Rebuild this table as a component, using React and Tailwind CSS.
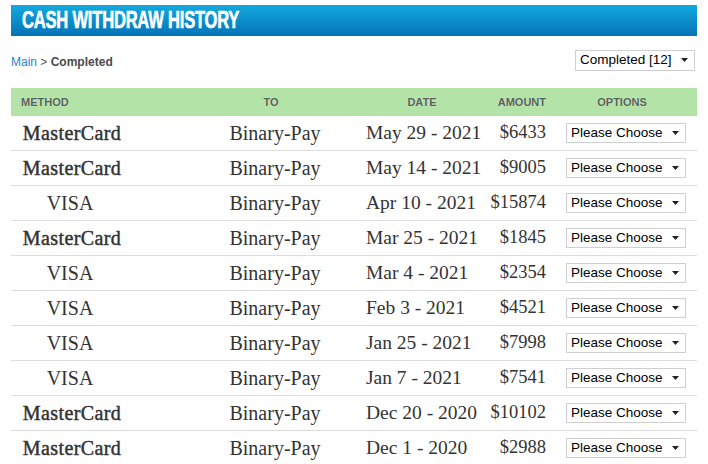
import React from 'react';

const rows = [
  { method: 'MasterCard', date: 'May 29 - 2021', amount: '$6433' },
  { method: 'MasterCard', date: 'May 14 - 2021', amount: '$9005' },
  { method: 'VISA', date: 'Apr 10 - 2021', amount: '$15874' },
  { method: 'MasterCard', date: 'Mar 25 - 2021', amount: '$1845' },
  { method: 'VISA', date: 'Mar 4 - 2021', amount: '$2354' },
  { method: 'VISA', date: 'Feb 3 - 2021', amount: '$4521' },
  { method: 'VISA', date: 'Jan 25 - 2021', amount: '$7998' },
  { method: 'VISA', date: 'Jan 7 - 2021', amount: '$7541' },
  { method: 'MasterCard', date: 'Dec 20 - 2020', amount: '$10102' },
  { method: 'MasterCard', date: 'Dec 1 - 2020', amount: '$2988' },
];

const Arrow = () => (
  <svg width="7" height="4" viewBox="0 0 7 4" className="shrink-0">
    <path d="M0 0h7L3.5 4z" fill="#222" />
  </svg>
);

const FakeSelect = ({ label, className }) => (
  <div
    className={`flex items-center justify-between border border-[#cfcfcf] bg-white font-['Liberation_Sans',Arial,sans-serif] text-black ${className}`}
  >
    <span className="leading-none">{label}</span>
    <Arrow />
  </div>
);

const App = () => {
  return (
    <div className="w-[708px] h-[464px] overflow-hidden bg-white pt-[5px] px-[11px]">
      <div className="h-[31px] flex items-center pl-[11px] bg-gradient-to-b from-[#14a9de] to-[#0673b7]">
        <h1 className="inline-block origin-left scale-x-[0.72] whitespace-nowrap font-['Liberation_Sans',sans-serif] font-bold text-[23px] text-white tracking-[-0.3px] leading-none [-webkit-text-stroke:0.6px_#fff]">
          CASH WITHDRAW HISTORY
        </h1>
      </div>

      <div className="flex items-center justify-between h-[36px] mt-[7px] pr-[2px]">
        <div className="font-['Liberation_Sans',Arial,sans-serif] text-[12px] pt-[1px]">
          <span className="text-[#2a85c4]">Main</span>
          <span className="text-[#555]"> &gt; </span>
          <span className="text-[#4a4a4a] font-bold">Completed</span>
        </div>
        <FakeSelect label="Completed [12]" className="w-[120px] h-[21px] pl-[4px] pr-[6px] mb-[2px] text-[13.5px]" />
      </div>

      <div className="h-[28px] mt-[9px] bg-[#b4e3a7] flex items-center font-['Liberation_Sans',Arial,sans-serif] font-bold text-[11px] text-[#55625a] [text-shadow:0_0_1px_#e8f6e4]">
        <div className="w-[122px] pl-[10px]">METHOD</div>
        <div className="w-[166px] ml-[59px] text-center pr-[8px]">TO</div>
        <div className="w-[128px] text-center">DATE</div>
        <div className="w-[60px] text-right whitespace-nowrap">AMOUNT</div>
        <div className="w-[120px] ml-[20px] text-center pr-[8px]">OPTIONS</div>
      </div>

      <div className="font-['Liberation_Serif','Times_New_Roman',serif] text-[20px] text-[#333]">
        {rows.map((r, i) => (
          <div key={i} className="h-[35px] flex items-center border-b-[1.5px] border-[#dddddd]">
            <div
              className={`w-[122px] text-center whitespace-nowrap ${r.method === 'MasterCard' ? 'tracking-[0.4px] [-webkit-text-stroke:0.45px_#333]' : 'pr-[4px]'}`}
            >
              {r.method}
            </div>
            <div className="w-[166px] ml-[59px] text-center">Binary-Pay</div>
            <div className="w-[128px] pl-[8px] text-[19.5px] whitespace-nowrap">{r.date}</div>
            <div className="w-[60px] text-right text-[18.5px] whitespace-nowrap">{r.amount}</div>
            <div className="ml-[20px]">
              <FakeSelect label="Please Choose" className="w-[120px] h-[20px] pl-[4px] pr-[6px] text-[13.5px]" />
            </div>
          </div>
        ))}
      </div>
    </div>
  );
};

export default App;
